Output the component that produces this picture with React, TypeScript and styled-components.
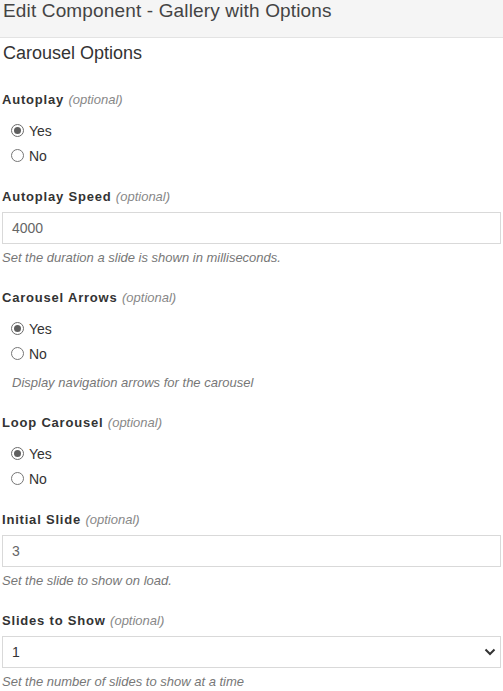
import React from "react";
import styled, { createGlobalStyle } from "styled-components";

const Global = createGlobalStyle`
  html, body { margin: 0; padding: 0; background: #fff; }
  body { font-family: "Liberation Sans", Arial, sans-serif; color: #333; }
  * { box-sizing: border-box; }
`;

const Page = styled.div`
  width: 503px;
  height: 691px;
  overflow: hidden;
  font-family: "Liberation Sans", Arial, sans-serif;
`;

const Header = styled.div`
  height: 38px;
  padding: 0 3px;
  background: #f5f5f5;
  border-bottom: 1px solid #e3e3e3;
  font-size: 19px;
  line-height: 22px;
  letter-spacing: 0.15px;
  color: #444;
`;

const Body = styled.div`
  padding: 5px 2px 0 2px;
`;

const SectionTitle = styled.div`
  font-size: 18px;
  line-height: 20px;
  color: #333;
  padding-left: 1px;
  margin-bottom: 28px;
`;

const Group = styled.div`
  margin-bottom: 22px;
`;

const Label = styled.div`
  font-size: 13px;
  line-height: 18px;
  font-weight: bold;
  color: #333;
  margin-bottom: 6px;
  letter-spacing: 0.8px;
`;

const Optional = styled.span`
  font-weight: normal;
  font-style: italic;
  color: #888;
  letter-spacing: 0;
`;

const RadioList = styled.div`
  display: flex;
  flex-direction: column;
  gap: 5px;
  padding-top: 6px;
  padding-left: 9px;
`;

const RadioRow = styled.div`
  display: flex;
  align-items: center;
  gap: 5px;
  height: 20px;
  font-size: 14px;
  color: #333;
`;

const Circle = styled.span<{ $on?: boolean }>`
  width: 13px;
  height: 13px;
  border-radius: 50%;
  border: 1px solid ${(p) => (p.$on ? "#6b6b6b" : "#767676")};
  display: flex;
  align-items: center;
  justify-content: center;
  margin-top: -1px;
  &::after {
    content: "";
    display: ${(p) => (p.$on ? "block" : "none")};
    width: 7px;
    height: 7px;
    border-radius: 50%;
    background: #5f5f5f;
  }
`;

const Field = styled.div<{ $dark?: boolean }>`
  position: relative;
  height: 32px;
  border: 1px solid #d9d9d9;
  background: #fff;
  padding: 0 10px 0 9px;
  display: flex;
  align-items: center;
  font-size: 14px;
  color: ${(p) => (p.$dark ? "#333" : "#666")};
`;

const Chevron = styled.svg`
  position: absolute;
  right: 4px;
  top: 11px;
`;

const Help = styled.div<{ $indent?: boolean }>`
  font-size: 13px;
  line-height: 17px;
  font-style: italic;
  color: #777;
  margin-top: ${(p) => (p.$indent ? "10px" : "5px")};
  padding-bottom: 1px;
  padding-left: ${(p) => (p.$indent ? "10px" : "0")};
`;

type RadioProps = { label: string; help?: string };

const RadioGroup = ({ label, help }: RadioProps) => (
  <Group>
    <Label>
      {label} <Optional>(optional)</Optional>
    </Label>
    <RadioList>
      <RadioRow>
        <Circle $on />
        Yes
      </RadioRow>
      <RadioRow>
        <Circle />
        No
      </RadioRow>
    </RadioList>
    {help && <Help $indent>{help}</Help>}
  </Group>
);

type InputProps = { label: string; value: string; help: string; select?: boolean };

const InputGroup = ({ label, value, help, select }: InputProps) => (
  <Group>
    <Label>
      {label} <Optional>(optional)</Optional>
    </Label>
    <Field $dark={select}>
      {value}
      {select && (
        <Chevron width="12" height="8" viewBox="0 0 12 8">
          <path d="M1.5 1.5 L6 6 L10.5 1.5" fill="none" stroke="#333" strokeWidth="2" />
        </Chevron>
      )}
    </Field>
    <Help>{help}</Help>
  </Group>
);

export default function App() {
  return (
    <Page>
      <Global />
      <Header>Edit Component - Gallery with Options</Header>
      <Body>
        <SectionTitle>Carousel Options</SectionTitle>
        <RadioGroup label="Autoplay" />
        <InputGroup label="Autoplay Speed" value="4000" help="Set the duration a slide is shown in milliseconds." />
        <RadioGroup label="Carousel Arrows" help="Display navigation arrows for the carousel" />
        <RadioGroup label="Loop Carousel" />
        <InputGroup label="Initial Slide" value="3" help="Set the slide to show on load." />
        <InputGroup label="Slides to Show" value="1" help="Set the number of slides to show at a time" select />
      </Body>
    </Page>
  );
}
